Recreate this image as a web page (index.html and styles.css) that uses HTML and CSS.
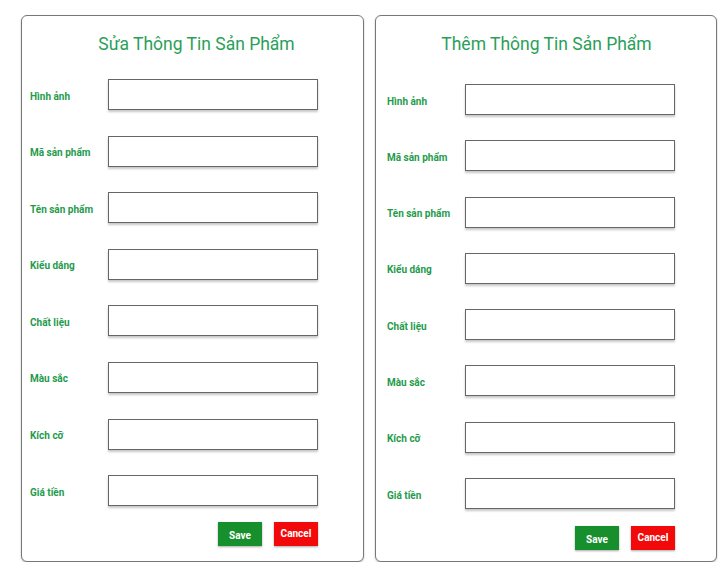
FILE: index.html
```html
<!DOCTYPE html>
<html lang="vi">
<head>
<meta charset="utf-8">
<title>Sản Phẩm</title>
<link rel="stylesheet" href="styles.css">
</head>
<body>
<div class="page">
  <section class="card card-edit">
    <h1 class="title">Sửa Thông Tin Sản Phẩm</h1>
    <form class="form">
      <div class="row"><label class="label">Hình ảnh</label><input class="field" type="text"></div>
      <div class="row"><label class="label">Mã sản phẩm</label><input class="field" type="text"></div>
      <div class="row"><label class="label">Tên sản phẩm</label><input class="field" type="text"></div>
      <div class="row"><label class="label">Kiểu dáng</label><input class="field" type="text"></div>
      <div class="row"><label class="label">Chất liệu</label><input class="field" type="text"></div>
      <div class="row"><label class="label">Màu sắc</label><input class="field" type="text"></div>
      <div class="row"><label class="label">Kích cỡ</label><input class="field" type="text"></div>
      <div class="row"><label class="label">Giá tiền</label><input class="field" type="text"></div>
    </form>
    <div class="actions">
      <button class="btn btn-save" type="button">Save</button>
      <button class="btn btn-cancel" type="button">Cancel</button>
    </div>
  </section>
  <section class="card card-add">
    <h1 class="title">Thêm Thông Tin Sản Phẩm</h1>
    <form class="form">
      <div class="row"><label class="label">Hình ảnh</label><input class="field" type="text"></div>
      <div class="row"><label class="label">Mã sản phẩm</label><input class="field" type="text"></div>
      <div class="row"><label class="label">Tên sản phẩm</label><input class="field" type="text"></div>
      <div class="row"><label class="label">Kiểu dáng</label><input class="field" type="text"></div>
      <div class="row"><label class="label">Chất liệu</label><input class="field" type="text"></div>
      <div class="row"><label class="label">Màu sắc</label><input class="field" type="text"></div>
      <div class="row"><label class="label">Kích cỡ</label><input class="field" type="text"></div>
      <div class="row"><label class="label">Giá tiền</label><input class="field" type="text"></div>
    </form>
    <div class="actions">
      <button class="btn btn-save" type="button">Save</button>
      <button class="btn btn-cancel" type="button">Cancel</button>
    </div>
  </section>
</div>
</body>
</html>
```
FILE: styles.css
```css
* { box-sizing: border-box; }

html, body {
  margin: 0;
  padding: 0;
  background: #ffffff;
  font-family: Roboto, "Liberation Sans", Arial, sans-serif;
}

.page {
  display: flex;
  gap: 11px;
  padding: 15px 0 0 21px;
  align-items: stretch;
}

.card {
  border: 1px solid #777777;
  border-radius: 6px;
  box-shadow: 0 1px 2px rgba(0, 0, 0, 0.25);
  background: #ffffff;
  display: flex;
  flex-direction: column;
}

.card-edit {
  width: 343px;
  padding: 18px 0 14px 8px;
}

.card-add {
  width: 342px;
  padding: 18px 10px 11px 11px;
}

.title {
  margin: 0;
  font-size: 17.5px;
  line-height: 21px;
  font-weight: 400;
  color: #2a9f58;
  text-align: center;
}

.form {
  display: flex;
  flex-direction: column;
  gap: 25.6px;
  margin: 24px 0 0 0;
}

.card-add .form {
  margin-top: 29px;
  gap: 25.3px;
}

.row {
  display: grid;
  grid-template-columns: 78px 210px;
  align-items: center;
}

.label {
  font-size: 10px;
  font-weight: 700;
  color: #1f9b4c;
  padding-top: 3px;
}

.field {
  height: 31px;
  width: 210px;
  margin: 0;
  border: 1px solid #666666;
  border-radius: 0;
  background: #ffffff;
  box-shadow: 0 2px 2px rgba(0, 0, 0, 0.22);
  outline: none;
}

.actions {
  display: flex;
  gap: 12px;
  margin-top: 16px;
  width: 288px;
  justify-content: flex-end;
}

.card-add .actions {
  margin-top: 17px;
}

.btn {
  width: 44px;
  height: 24px;
  border: none;
  padding: 0;
  font-family: Roboto, "Liberation Sans", Arial, sans-serif;
  font-size: 10px;
  font-weight: 700;
  color: #ffffff;
  box-shadow: 0 1px 2px rgba(0, 0, 0, 0.35);
  cursor: pointer;
}

.btn-save {
  background: #178f2d;
  padding-top: 2px;
}

.btn-cancel {
  background: #f20a0a;
  padding-bottom: 2px;
}
```
